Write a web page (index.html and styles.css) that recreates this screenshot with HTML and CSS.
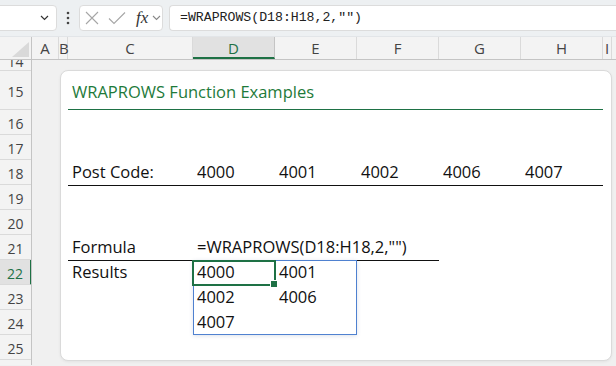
FILE: index.html
```html
<!DOCTYPE html>
<html lang="en">
<head>
  <meta charset="UTF-8" />
  <meta name="viewport" content="width=device-width, initial-scale=1.0" />
  <title>WRAPROWS Function Examples</title>
  <link rel="stylesheet" href="styles.css">
</head>
<body>
  <div class="toolbar">
    <div class="namebox">
      <svg class="chev" width="9" height="6" viewBox="0 0 9 6"><path d="M1 1 L4.5 4.5 L8 1" fill="none" stroke="#333" stroke-width="1.2"/></svg>
    </div>
    <svg class="grip" width="4" height="14" viewBox="0 0 4 14"><circle cx="2" cy="2" r="1.3" fill="#444"/><circle cx="2" cy="7" r="1.3" fill="#444"/><circle cx="2" cy="12" r="1.3" fill="#444"/></svg>
    <div class="fx-buttons">
      <svg width="14" height="14" viewBox="0 0 14 14"><path d="M1 1 L13 13 M13 1 L1 13" stroke="#a6a6a6" stroke-width="1.1" fill="none"/></svg>
      <svg width="18" height="14" viewBox="0 0 18 14"><path d="M1 7.5 L6 12.5 L17 1.5" stroke="#a6a6a6" stroke-width="1.1" fill="none"/></svg>
      <span class="fx">fx</span>
      <svg width="9" height="6" viewBox="0 0 9 6"><path d="M1 1 L4.5 4.5 L8 1" fill="none" stroke="#888" stroke-width="1.1"/></svg>
    </div>
    <div class="formula">=WRAPROWS(D18:H18,2,"")</div>
  </div>

  <div class="col-headers">
    <div class="corner">
      <svg width="17" height="15" viewBox="0 0 17 15"><polygon points="17,0 17,15 0,15" fill="#d9d9d9"/></svg>
    </div>
    <div class="col-head w-a">A</div>
    <div class="col-head w-b">B</div>
    <div class="col-head w-c">C</div>
    <div class="col-head w-d active">D</div>
    <div class="col-head w-d">E</div>
    <div class="col-head w-d">F</div>
    <div class="col-head w-d">G</div>
    <div class="col-head w-d">H</div>
    <div class="col-head w-i">I</div>
    <div class="col-head w-rest"></div>
  </div>

  <div class="sheet">
    <div class="row-heads">
      <div class="row-head r-cut">14</div>
      <div class="row-head r-tall">15</div>
      <div class="row-head">16</div>
      <div class="row-head">17</div>
      <div class="row-head">18</div>
      <div class="row-head">19</div>
      <div class="row-head">20</div>
      <div class="row-head">21</div>
      <div class="row-head active">22</div>
      <div class="row-head">23</div>
      <div class="row-head">24</div>
      <div class="row-head">25</div>
      <div class="row-head"></div>
    </div>

    <div class="canvas">
      <div class="card">
        <div class="cells">
          <div class="cell title">WRAPROWS Function Examples</div>

          <div class="cell r18 c1">Post Code:</div>
          <div class="cell r18 c2">4000</div>
          <div class="cell r18 c3">4001</div>
          <div class="cell r18 c4">4002</div>
          <div class="cell r18 c5">4006</div>
          <div class="cell r18 c6">4007</div>
          <div class="rule rule-18"></div>

          <div class="cell r21 c1">Formula</div>
          <div class="cell r21 c2 wide">=WRAPROWS(D18:H18,2,"")</div>
          <div class="rule rule-21"></div>

          <div class="cell r22 c1">Results</div>
          <div class="cell r22 c2">4000</div>
          <div class="cell r22 c3">4001</div>
          <div class="cell r23 c2">4002</div>
          <div class="cell r23 c3">4006</div>
          <div class="cell r24 c2">4007</div>

          <div class="spill"></div>
          <div class="active-cell"></div>
        </div>
      </div>
    </div>
  </div>
</body>
</html>
```

FILE: styles.css
```css
* {
  box-sizing: border-box;
}
body {
  margin: 0;
  width: 616px;
  height: 366px;
  overflow: hidden;
  font-family: "Open Sans", "Noto Sans", sans-serif;
  background: #f0f0f0;
  color: #222;
}

/* formula bar */
.toolbar {
  height: 37px;
  display: flex;
  align-items: center;
  padding-bottom: 1px;
  background: #edf0f2;
  border-bottom: 1px solid #e2e5e8;
}
.namebox {
  width: 61px;
  height: 26px;
  margin-left: -4px;
  background: #fff;
  border: 1px solid #dcdcdc;
  border-radius: 4px;
  display: flex;
  align-items: center;
  justify-content: flex-end;
  padding-right: 7px;
}
.grip {
  margin-left: 9px;
}
.fx-buttons {
  margin-left: 9px;
  width: 84px;
  height: 26px;
  background: #fff;
  border: 1px solid #dcdcdc;
  border-radius: 4px;
  display: flex;
  align-items: center;
  padding-left: 5px;
  gap: 7px;
}
.fx-buttons svg:nth-child(2) {
  margin-left: 2px;
}
.fx {
  font-family: "Liberation Serif", serif;
  font-style: italic;
  font-size: 17px;
  color: #333;
  margin-left: 3px;
  margin-right: -3px;
}
.formula {
  margin-left: 6px;
  flex: 1;
  height: 26px;
  background: #fff;
  border: 1px solid #dcdcdc;
  border-right: none;
  border-radius: 4px 0 0 4px;
  padding-left: 10px;
  font-family: "Liberation Mono", monospace;
  font-size: 13.2px;
  line-height: 24px;
  color: #222;
}

/* column headers */
.col-headers {
  display: flex;
  height: 23px;
  background: #f3f3f3;
  border-bottom: 1px solid #c4c4c4;
}
.corner {
  width: 32px;
  border-right: 1px solid #c4c4c4;
  display: flex;
  align-items: flex-end;
  justify-content: flex-end;
  padding: 0 2px 2px 0;
}
.col-head {
  border-right: 1px solid #dadada;
  text-align: center;
  font-size: 15px;
  line-height: 22px;
  color: #444;
}
.col-head.active {
  background: #e1e1e1;
  color: #1e7145;
  border-bottom: 2px solid #1e7145;
  border-right-color: #c4c4c4;
}
.w-a { width: 27px; }
.w-b { width: 9px; }
.w-c { width: 125px; }
.w-d { width: 82px; }
.w-i { width: 9px; }
.w-rest { flex: 1; border-right: none; }

/* sheet body */
.sheet {
  display: flex;
  height: 305px;
}
.row-heads {
  width: 32px;
  background: #f3f3f3;
  border-right: 1px solid #c4c4c4;
  overflow: hidden;
}
.row-head {
  height: 25px;
  border-bottom: 1px solid #dadada;
  text-align: center;
  font-size: 14px;
  line-height: 27px;
  color: #444;
}
.row-head.r-cut {
  height: 11px;
  line-height: 4px;
  overflow: hidden;
}
.row-head.r-tall {
  height: 39px;
  line-height: 42px;
}
.row-head.active {
  background: #e1e1e1;
  color: #1e7145;
  border-right: 2px solid #1e7145;
  margin-right: -1px;
}

.canvas {
  flex: 1;
  overflow: hidden;
}
.card {
  width: 552px;
  margin: 10px 0 0 28px;
  background: #fff;
  border: 1px solid #dadada;
  border-radius: 8px;
  box-shadow: 0 1px 3px rgba(0,0,0,0.06);
  padding: 0 0 0 7px;
}
.cells {
  display: grid;
  grid-template-columns: 125px repeat(5, 82px);
  grid-template-rows: 39px repeat(10, 25px);
}
.cell {
  display: flex;
  align-items: flex-end;
  padding: 0 4px 3px;
  font-size: 16.5px;
  line-height: 20px;
  color: #111;
  white-space: nowrap;
}
.cell.title {
  grid-row: 1;
  grid-column: 1 / span 6;
  color: #1e7a3a;
  border-bottom: 1px solid #1e7145;
  padding-bottom: 7px;
}
.cell.wide { grid-column: 2 / span 3; }
.r18 { grid-row: 4; }
.r21 { grid-row: 7; }
.r22 { grid-row: 8; }
.r23 { grid-row: 9; }
.r24 { grid-row: 10; }
.c1 { grid-column: 1; }
.c2 { grid-column: 2; }
.c3 { grid-column: 3; }
.c4 { grid-column: 4; }
.c5 { grid-column: 5; }
.c6 { grid-column: 6; }

.rule {
  height: 1px;
  background: #111;
  align-self: start;
}
.rule-18 {
  grid-row: 5;
  grid-column: 1 / span 6;
}
.rule-21 {
  grid-row: 8;
  grid-column: 1 / span 4;
}

.spill {
  grid-row: 8 / span 3;
  grid-column: 2 / span 2;
  border: 1px solid #4f81d0;
  box-shadow: 0 1px 4px rgba(60,90,140,0.18);
}
.active-cell {
  grid-row: 8;
  grid-column: 2;
  margin: 0 -1px -1px -1px;
  border: 2px solid #1e7145;
  position: relative;
}
.active-cell::after {
  content: "";
  position: absolute;
  right: -4px;
  bottom: -4px;
  width: 6px;
  height: 6px;
  background: #1e7145;
  border: 1px solid #fff;
}
```
